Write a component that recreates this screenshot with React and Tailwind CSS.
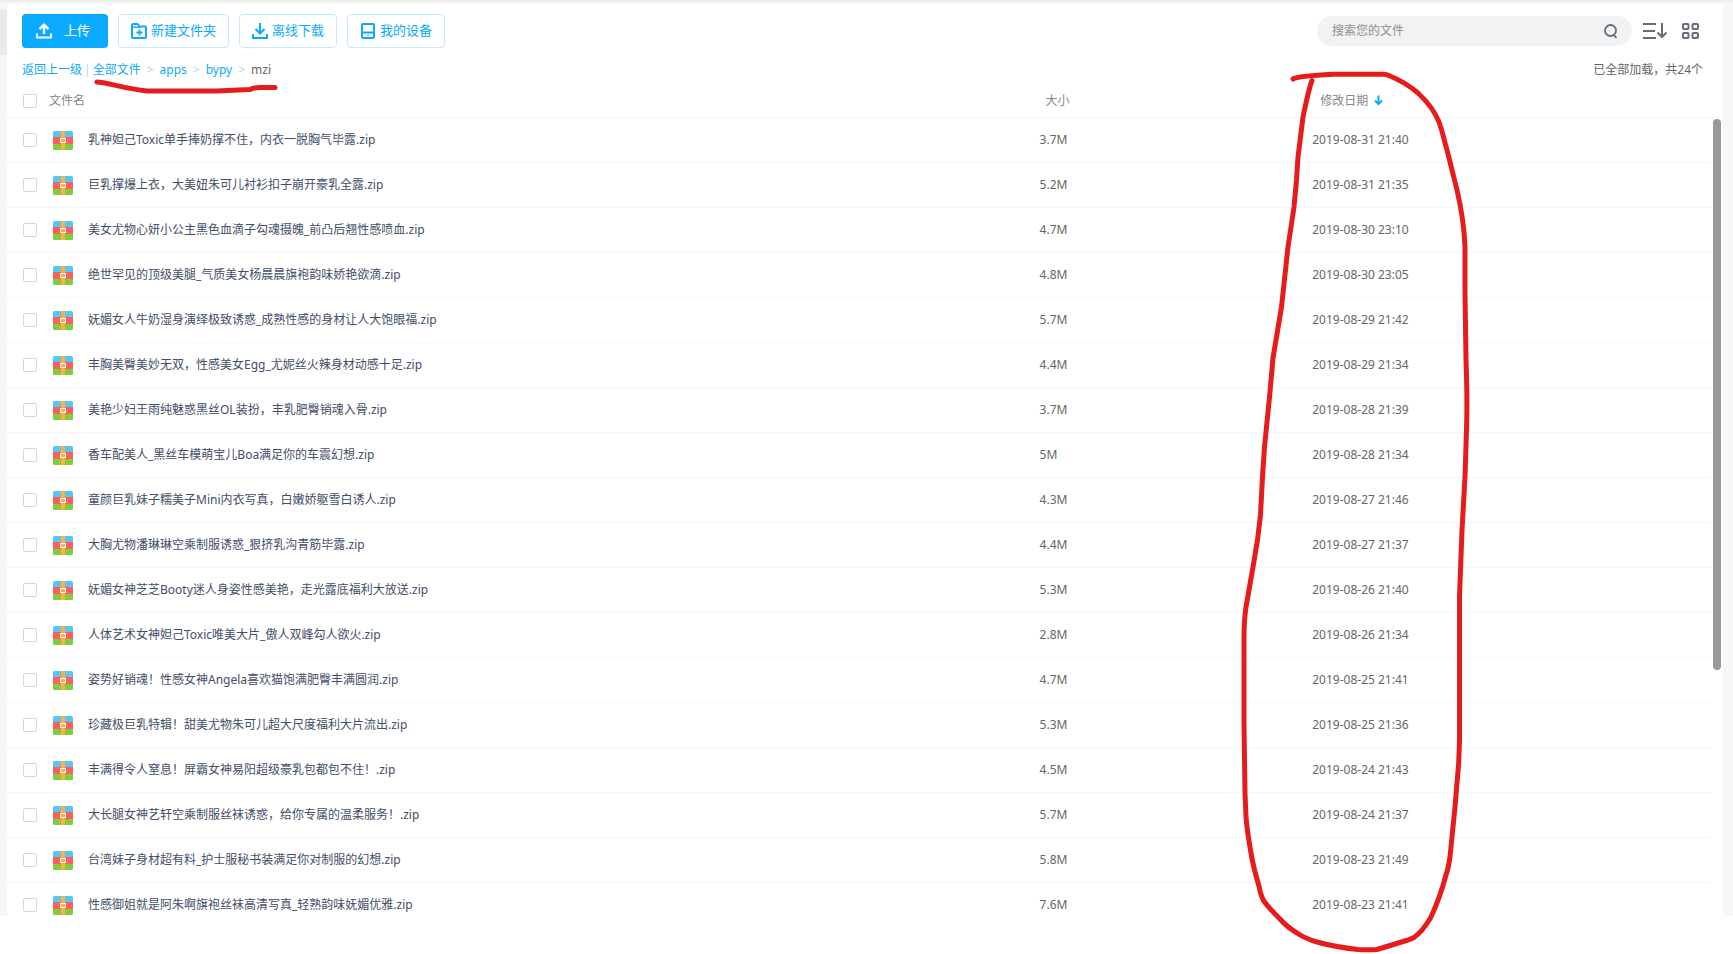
import React, { useState } from 'react'

const files = [
  { name: '乳神妲己Toxic单手捧奶撑不住，内衣一脱胸气毕露.zip', size: '3.7M', date: '2019-08-31 21:40' },
  { name: '巨乳撑爆上衣，大美妞朱可儿衬衫扣子崩开豪乳全露.zip', size: '5.2M', date: '2019-08-31 21:35' },
  { name: '美女尤物心妍小公主黑色血滴子勾魂摄魄_前凸后翘性感喷血.zip', size: '4.7M', date: '2019-08-30 23:10' },
  { name: '绝世罕见的顶级美腿_气质美女杨晨晨旗袍韵味娇艳欲滴.zip', size: '4.8M', date: '2019-08-30 23:05' },
  { name: '妩媚女人牛奶湿身演绎极致诱惑_成熟性感的身材让人大饱眼福.zip', size: '5.7M', date: '2019-08-29 21:42' },
  { name: '丰胸美臀美妙无双，性感美女Egg_尤妮丝火辣身材动感十足.zip', size: '4.4M', date: '2019-08-29 21:34' },
  { name: '美艳少妇王雨纯魅惑黑丝OL装扮，丰乳肥臀销魂入骨.zip', size: '3.7M', date: '2019-08-28 21:39' },
  { name: '香车配美人_黑丝车模萌宝儿Boa满足你的车震幻想.zip', size: '5M', date: '2019-08-28 21:34' },
  { name: '童颜巨乳妹子糯美子Mini内衣写真，白嫩娇躯雪白诱人.zip', size: '4.3M', date: '2019-08-27 21:46' },
  { name: '大胸尤物潘琳琳空乘制服诱惑_狠挤乳沟青筋毕露.zip', size: '4.4M', date: '2019-08-27 21:37' },
  { name: '妩媚女神芝芝Booty迷人身姿性感美艳，走光露底福利大放送.zip', size: '5.3M', date: '2019-08-26 21:40' },
  { name: '人体艺术女神妲己Toxic唯美大片_傲人双峰勾人欲火.zip', size: '2.8M', date: '2019-08-26 21:34' },
  { name: '姿势好销魂！性感女神Angela喜欢猫饱满肥臀丰满圆润.zip', size: '4.7M', date: '2019-08-25 21:41' },
  { name: '珍藏极巨乳特辑！甜美尤物朱可儿超大尺度福利大片流出.zip', size: '5.3M', date: '2019-08-25 21:36' },
  { name: '丰满得令人窒息！屏霸女神易阳超级豪乳包都包不住！.zip', size: '4.5M', date: '2019-08-24 21:43' },
  { name: '大长腿女神艺轩空乘制服丝袜诱惑，给你专属的温柔服务！.zip', size: '5.7M', date: '2019-08-24 21:37' },
  { name: '台湾妹子身材超有料_护士服秘书装满足你对制服的幻想.zip', size: '5.8M', date: '2019-08-23 21:49' },
  { name: '性感御姐就是阿朱啊旗袍丝袜高清写真_轻熟韵味妩媚优雅.zip', size: '7.6M', date: '2019-08-23 21:41' },
]

const UploadIcon = () => (
  <svg width="16" height="16" viewBox="0 0 16 16" fill="none" stroke="currentColor" strokeWidth="2">
    <path d="M1 10.500v4h14v-4" />
    <path d="M8 11V2.500" strokeWidth="2.400" />
    <path d="M3.500 6.200 8 1.700l4.500 4.500" strokeWidth="2.400" />
  </svg>
)

const NewFolderIcon = () => (
  <svg width="16" height="16" viewBox="0 0 16 16" fill="none" stroke="currentColor" strokeWidth="2" strokeLinejoin="round">
    <path d="M1 13.500V2a1 1 0 0 1 1-1h4.500l2 2.500H14a1 1 0 0 1 1 1V14a1 1 0 0 1-1 1H2a1 1 0 0 1-1-1.500z" />
    <path d="M1.500 4.200h8" strokeWidth="1.400" />
    <path d="M8.500 6.500v6M5.500 9.500h6" strokeWidth="1.800" />
  </svg>
)

const DownloadIcon = () => (
  <svg width="16" height="16" viewBox="0 0 16 16" fill="none" stroke="currentColor" strokeWidth="2">
    <path d="M1 11v4h14v-4" />
    <path d="M8 0v10" />
    <path d="M3.500 6 8 10.500 12.500 6" />
  </svg>
)

const DeviceIcon = () => (
  <svg width="16" height="16" viewBox="0 0 16 16" fill="none" stroke="currentColor" strokeWidth="2">
    <rect x="2" y="1" width="12" height="14" rx="1" />
    <path d="M2 9.500h12" />
    <path d="M7.300 12.300h1.500" strokeWidth="1.500" />
  </svg>
)

const SearchIcon = () => (
  <svg width="14" height="15" viewBox="0 0 14 15" fill="none" stroke="currentColor" strokeWidth="1.800">
    <circle cx="6.500" cy="6.500" r="5.500" />
    <path d="M9.500 10.500 12.500 14" />
  </svg>
)

const SortIcon = () => (
  <svg width="25" height="16" viewBox="0 0 25 16" fill="none" stroke="currentColor" strokeWidth="2">
    <path d="M0 1h13M0 8h12M0 15h13" />
    <path d="M19 0v14" />
    <path d="M14.500 9.500 19 14l4.500-4.500" />
  </svg>
)

const GridIcon = () => (
  <svg width="17" height="16" viewBox="0 0 17 16" fill="none" stroke="currentColor" strokeWidth="2">
    <rect x="1" y="1" width="5.500" height="5" rx="1" />
    <rect x="10.500" y="1" width="5.500" height="5" rx="1" />
    <rect x="1" y="10" width="5.500" height="5" rx="1" />
    <rect x="10.500" y="10" width="5.500" height="5" rx="1" />
  </svg>
)

const ArrowIcon = () => (
  <svg width="9" height="11" viewBox="0 0 9 11" fill="none" stroke="#09aaff" strokeWidth="2">
    <path d="M4.500 0.500v8.500" />
    <path d="M1 5.500 4.500 9 8 5.500" />
  </svg>
)

const ZipIcon = () => (
  <svg width="20" height="19" viewBox="0 0 20 19" className="shrink-0">
    <path d="M0 6V1.500A1.500 1.500 0 0 1 1.500 0h17A1.500 1.500 0 0 1 20 1.500V6z" fill="#55c7f7" />
    <path d="M0 6h20v7H0z" fill="#ff5f5c" />
    <path d="M0 13h20v4.500a1.500 1.500 0 0 1-1.500 1.500h-17A1.500 1.500 0 0 1 0 17.500z" fill="#7fcd3c" />
    <path d="M8 0h4v19H8z" fill="#ffae43" />
    <rect x="7.500" y="7.500" width="5" height="4" fill="#ffae43" stroke="#fff" />
  </svg>
)

const Checkbox = ({ label, checked, onChange }) => (
  <input
    type="checkbox"
    aria-label={label}
    checked={checked}
    onChange={onChange}
    className="w-[14px] h-[14px] shrink-0 appearance-none rounded-xs border border-[#d3d9e4] bg-white checked:bg-[#09aaff]"
  />
)

const ToolButton = ({ icon, children }) => (
  <button className="h-[34px] px-3 flex items-center gap-1 rounded-sm border border-[#c3eaff] text-[13px] text-[#09aaff]">
    {icon}
    {children}
  </button>
)

// Red pen strokes drawn over the page
const PenMarks = () => (
  <svg
    width="1733"
    height="954"
    viewBox="0 0 1733 954"
    fill="none"
    stroke="#e61b1b"
    strokeWidth="5"
    strokeLinecap="round"
    strokeLinejoin="round"
    className="absolute top-0 left-0 pointer-events-none"
  >
    <path d="M97 82C106 82 125 89 147 91H217L250 89.500Q254 87.500 260 87.500H275" />
    <path d="M1293 79C1298 76 1315 75.500 1333 74.300H1382Q1386 74 1390 76Q1405 82 1418 93Q1433 107 1439 122C1443 133 1445 144 1447 150L1457 190Q1464 220 1465 247V293L1466 360Q1467.500 400 1466.500 430L1465 477L1462 530L1459.500 597V740L1458.700 763L1455 807L1450 857Q1448 870 1446 875Q1440 898 1430.500 918Q1422 932 1414 937.500Q1411 939 1408 940L1377 949.500Q1368 950 1358 949.500Q1335 947 1317 942Q1306 939 1297 933Q1287 927 1280 919Q1268 907 1263.500 900.500Q1260 893 1259.500 888Q1253 866 1251 853Q1247 830 1246 817L1245 793L1244 723V640Q1244 620 1246 607L1252.500 570L1257.500 540L1260.500 515L1262.500 477L1264.500 447L1270 392L1273 358L1281.500 307L1288 247L1294 207L1296.500 180L1298 157L1303 117Q1309 88 1312 80.500" />
  </svg>
)

const App = () => {
  const [selected, setSelected] = useState([])
  const allSelected = selected.length === files.length

  const toggle = (name) => {
    setSelected(selected.includes(name) ? selected.filter((n) => n !== name) : [...selected, name])
  }

  return (
    <div className="relative h-screen pb-[38px] flex flex-col overflow-hidden bg-white text-xs font-['Noto_Sans','Noto_Sans_CJK_SC',sans-serif]">
      <div className="h-1 shrink-0 bg-gradient-to-b from-[#ebebeb] to-[#fafafa]" />

      <div className="flex-1 min-h-0 flex">
        <div className="w-[7px] pt-1.5 bg-[#f7f7f7]">
          <div className="h-[45px] bg-[#e9e9e9]" />
        </div>

        <main className="flex-1 min-w-0 flex flex-col">
          <div className="pt-[10px] pl-[15px] pr-6 flex items-center justify-between">
            <div className="flex gap-[10px]">
              <button className="h-[34px] w-[86px] pl-[14px] flex items-center gap-3 rounded-sm bg-[#09aaff] text-[13px] text-white">
                <UploadIcon />
                上传
              </button>
              <ToolButton icon={<NewFolderIcon />}>新建文件夹</ToolButton>
              <ToolButton icon={<DownloadIcon />}>离线下载</ToolButton>
              <ToolButton icon={<DeviceIcon />}>我的设备</ToolButton>
            </div>

            <div className="flex items-center text-[#666d75]">
              <div className="w-[315px] h-[30px] pl-[15px] pr-3.5 flex items-center rounded-full bg-[#f0f2f4]">
                <input
                  type="text"
                  aria-label="搜索您的文件"
                  placeholder="搜索您的文件"
                  className="flex-1 min-w-0 bg-transparent outline-none placeholder:text-[#8e8e8e]"
                />
                <button aria-label="搜索"><SearchIcon /></button>
              </div>
              <button aria-label="排序" className="ml-[11px]"><SortIcon /></button>
              <button aria-label="网格视图" className="ml-[14px]"><GridIcon /></button>
            </div>
          </div>

          <div className="h-11 pl-[15px] pr-5 flex items-center justify-between text-[#666]">
            <nav className="flex items-center text-[#09aaff]">
              <a href="#">返回上一级</a>
              <span className="px-0.5 text-[#b3d3f5]">|</span>
              <a href="#">全部文件</a>
              <span className="px-1.5 text-[#b3d3f5]">&gt;</span>
              <a href="#">apps</a>
              <span className="px-1.5 text-[#b3d3f5]">&gt;</span>
              <a href="#">bypy</a>
              <span className="px-1.5 text-[#b3d3f5]">&gt;</span>
              <span className="text-[#666]">mzi</span>
            </nav>
            <span>已全部加载，共24个</span>
          </div>

          <div className="flex-1 min-h-0 flex overflow-hidden">
            <div className="flex-1 min-w-0">
              <table className="w-full table-fixed border-separate border-spacing-0 text-left text-[#666]">
                <thead className="text-[#888]">
                  <tr className="h-[26px]">
                    <th className="w-[60.6%] p-0 pl-4 pb-2 border-b border-[#f2f6fd] font-normal">
                      <div className="flex items-center gap-3">
                        <Checkbox
                          label="全选"
                          checked={allSelected}
                          onChange={() => setSelected(allSelected ? [] : files.map((f) => f.name))}
                        />
                        文件名
                      </div>
                    </th>
                    <th className="w-[16%] p-0 pl-1.5 pb-2 border-b border-[#f2f6fd] font-normal">大小</th>
                    <th className="p-0 pl-2 pb-2 border-b border-[#f2f6fd] font-normal">
                      <div className="flex items-center gap-1.5">
                        修改日期
                        <ArrowIcon />
                      </div>
                    </th>
                  </tr>
                </thead>
                <tbody>
                  {files.map((file) => (
                    <tr key={file.name} className="h-[45px]">
                      <td className="p-0 pl-4 border-b border-[#f2f6fd]">
                        <div className="flex items-center">
                          <Checkbox
                            label={file.name}
                            checked={selected.includes(file.name)}
                            onChange={() => toggle(file.name)}
                          />
                          <span className="pl-4 pr-[15px]"><ZipIcon /></span>
                          <a href="#" className="truncate text-[#424e67]">{file.name}</a>
                        </div>
                      </td>
                      <td className="p-0 border-b border-[#f2f6fd]">{file.size}</td>
                      <td className="p-0 border-b border-[#f2f6fd]">{file.date}</td>
                    </tr>
                  ))}
                </tbody>
              </table>
            </div>

            <div className="w-3 pt-[25px]">
              <div className="border-t border-[#f2f6fd] pt-px pl-0.5">
                <div className="w-2 h-[551px] rounded-full bg-[#999]" />
              </div>
            </div>
          </div>
        </main>

        <div className="w-[10px] bg-[#f7f7f7]" />
      </div>

      <PenMarks />
    </div>
  )
}

export default App
